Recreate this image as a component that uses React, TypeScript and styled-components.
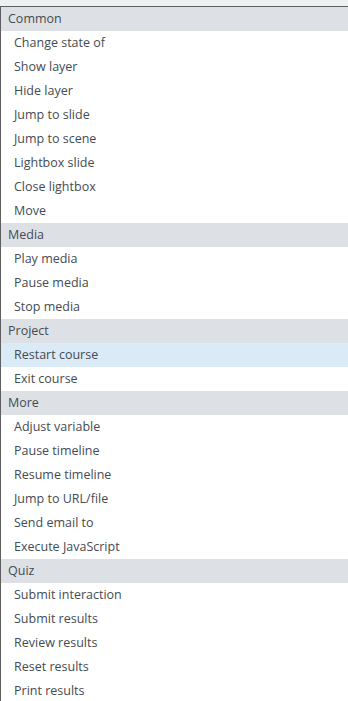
import { createGlobalStyle } from 'styled-components';
import styled from 'styled-components';

const GlobalStyle = createGlobalStyle`
	html, body {
		margin: 0;
		padding: 0;
		background: #ffffff;
	}
	body {
		font-family: 'Open Sans', 'Liberation Sans', sans-serif;
	}
`;

const Page = styled.div`
	width: 348px;
	height: 701px;
	overflow: hidden;
	display: flex;
	flex-direction: column;
`;

const TopStrip = styled.div`
	height: 6px;
	flex: none;
	background: #eef1f2;
`;

const Panel = styled.div`
	flex: 1;
	border-top: 1px solid #5f5f5f;
	border-left: 1px solid #5f5f5f;
	background: #ffffff;
`;

const GroupHeader = styled.div`
	height: 24px;
	box-sizing: border-box;
	display: flex;
	align-items: center;
	padding: 0 0 2px 7px;
	background: #dde1e5;
	color: #454b52;
	font-size: 12.5px;
`;

const Item = styled.div<{ $selected?: boolean }>`
	height: 24px;
	box-sizing: border-box;
	display: flex;
	align-items: center;
	padding: 0 0 2px 13px;
	background: ${({ $selected }) => ($selected ? '#dbeaf7' : '#ffffff')};
	color: #454b52;
	font-size: 12.5px;
`;

interface IGroup {
	title: string;
	items: string[];
}

const groups: IGroup[] = [
	{
		title: 'Common',
		items: [
			'Change state of',
			'Show layer',
			'Hide layer',
			'Jump to slide',
			'Jump to scene',
			'Lightbox slide',
			'Close lightbox',
			'Move'
		]
	},
	{ title: 'Media', items: ['Play media', 'Pause media', 'Stop media'] },
	{ title: 'Project', items: ['Restart course', 'Exit course'] },
	{
		title: 'More',
		items: [
			'Adjust variable',
			'Pause timeline',
			'Resume timeline',
			'Jump to URL/file',
			'Send email to',
			'Execute JavaScript'
		]
	},
	{
		title: 'Quiz',
		items: ['Submit interaction', 'Submit results', 'Review results', 'Reset results', 'Print results']
	}
];

const selectedItem = 'Restart course';

const App: React.FC = () => {
	return (
		<>
			<GlobalStyle />
			<Page>
				<TopStrip />
				<Panel>
					{groups.map((group) => (
						<div key={group.title}>
							<GroupHeader>{group.title}</GroupHeader>
							{group.items.map((item) => (
								<Item key={item} $selected={item === selectedItem}>
									{item}
								</Item>
							))}
						</div>
					))}
				</Panel>
			</Page>
		</>
	);
};

export default App;
